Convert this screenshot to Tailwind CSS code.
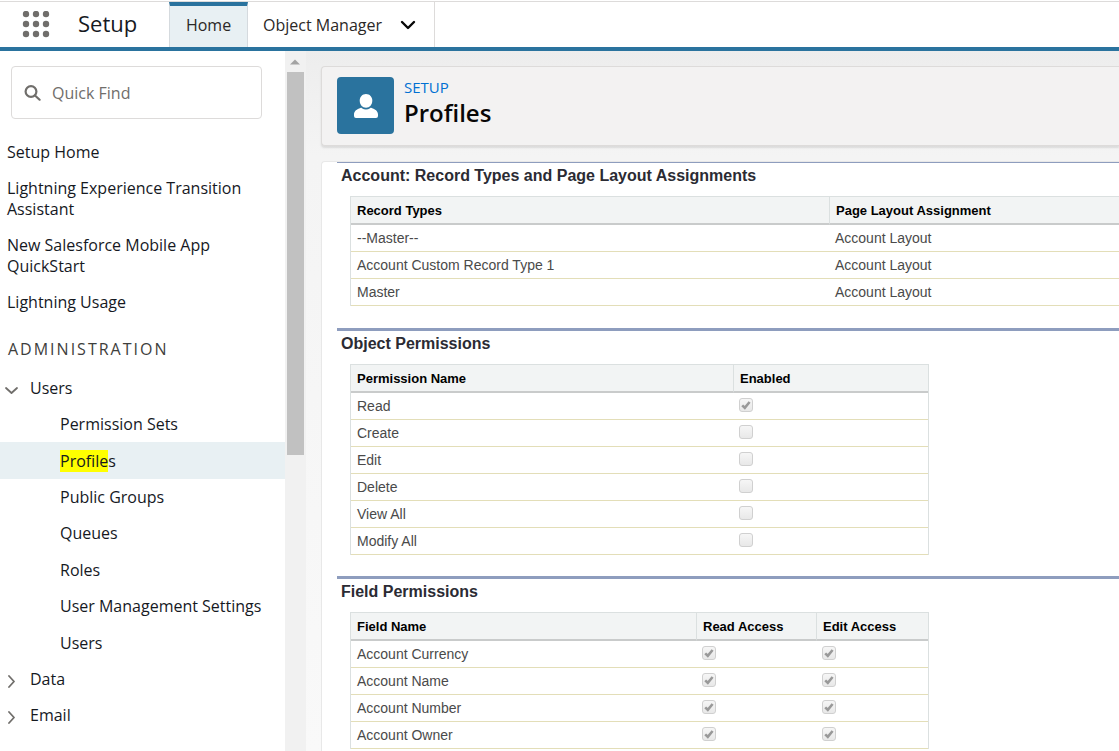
<!DOCTYPE html>
<html lang="en">
<head>
<meta charset="utf-8">
<meta name="viewport" content="width=device-width, initial-scale=1">
<title>Profiles | Setup</title>
<script src="https://cdn.jsdelivr.net/npm/@tailwindcss/browser@4"></script>
</head>
<body class="flex h-screen flex-col overflow-hidden bg-white font-['Open_Sans','Noto_Sans',sans-serif] text-base text-[#16191f]">
<svg class="hidden" aria-hidden="true">
  <symbol id="check" viewBox="0 0 14 14"><path d="M3.2 7.4 5.8 9.8 10.6 4" fill="none" stroke="#999" stroke-width="2.6"/></symbol>
</svg>

<header class="mt-px flex h-[50px] shrink-0 items-stretch border-t border-b-4 border-t-[#dddbda] border-b-[#2a739e]">
  <button class="ml-[22px] self-center" aria-label="App Launcher">
    <svg class="size-[28px]" viewBox="0 0 28 28" fill="#706e6b">
      <circle cx="4" cy="3" r="3.2"/><circle cx="14" cy="3" r="3.2"/><circle cx="24" cy="3" r="3.2"/>
      <circle cx="4" cy="13" r="3.2"/><circle cx="14" cy="13" r="3.2"/><circle cx="24" cy="13" r="3.2"/>
      <circle cx="4" cy="23" r="3.2"/><circle cx="14" cy="23" r="3.2"/><circle cx="24" cy="23" r="3.2"/>
    </svg>
  </button>
  <span class="ml-7 w-[91px] self-center pb-1 text-[22px] leading-7 text-[#16191f]">Setup</span>
  <nav class="flex" aria-label="Setup">
    <a href="#" aria-current="page" class="flex w-[79px] items-center justify-center border-x border-t-4 border-x-[#d5dade] border-t-[#2a739e] bg-[#e8f0f3] pb-1 text-[#2b2826]">Home</a>
    <a href="#" class="flex items-center pl-[15px] text-[#2b2826]">Object Manager</a>
    <button class="flex w-[53px] items-center justify-center border-r border-[#dddbda]" aria-label="More tabs">
      <svg class="h-[10px] w-4" viewBox="0 0 16 10" fill="none" stroke="#080707" stroke-width="2.4" stroke-linecap="round" stroke-linejoin="round"><path d="M2 2l6 6 6-6"/></svg>
    </button>
  </nav>
</header>

<div class="flex min-h-0 grow">
  <aside class="flex w-[306px] shrink-0">
    <div class="min-w-0 grow pt-[15px]">
      <label class="ml-[11px] mr-[23px] flex h-[53px] items-center gap-[11px] rounded border border-[#dddbda] pl-3">
        <svg class="size-[17px] shrink-0" viewBox="0 0 17 17" fill="none" stroke="#706e6b" stroke-width="2.2" stroke-linecap="round"><circle cx="7" cy="7.500" r="5.400"/><path d="M11 11.500l4.600 4.200"/></svg>
        <input type="search" placeholder="Quick Find" aria-label="Quick Find" class="w-full min-w-0 outline-none placeholder:text-[#706e6b]">
      </label>
      <nav aria-label="Setup menu">
        <ul class="mt-[23px] flex flex-col gap-[15px] px-[7px] leading-[21px]">
          <li><a href="#">Setup Home</a></li>
          <li><a href="#">Lightning Experience Transition<br>Assistant</a></li>
          <li><a href="#">New Salesforce Mobile App<br>QuickStart</a></li>
          <li><a href="#">Lightning Usage</a></li>
        </ul>
        <h2 class="mt-[26px] px-2 leading-[21px] tracking-[2px] text-[#3e3e3c]">ADMINISTRATION</h2>
        <ul class="mt-[10px]">
          <li>
            <a href="#" class="flex h-9 items-center gap-3 pl-[5px]"><svg class="mt-1 size-[13px]" viewBox="0 0 13 13" fill="none" stroke="#706e6b" stroke-width="1.8" stroke-linecap="round" stroke-linejoin="round"><path d="M1 4l5.500 5L12 4"/></svg>Users</a>
            <ul class="grid h-[255px] grid-rows-7">
              <li class="flex items-center pl-[60px]"><a href="#">Permission Sets</a></li>
              <li class="flex items-center bg-[#e8f0f3] pl-[60px]"><a href="#" aria-current="page"><mark class="bg-[#ff0] text-inherit">Profile</mark>s</a></li>
              <li class="flex items-center pl-[60px]"><a href="#">Public Groups</a></li>
              <li class="flex items-center pl-[60px]"><a href="#">Queues</a></li>
              <li class="flex items-center pl-[60px]"><a href="#">Roles</a></li>
              <li class="flex items-center pl-[60px]"><a href="#">User Management Settings</a></li>
              <li class="flex items-center pl-[60px]"><a href="#">Users</a></li>
            </ul>
          </li>
          <li><a href="#" class="flex h-9 items-center gap-3 pl-[5px]"><svg class="mt-1 size-[13px]" viewBox="0 0 13 13" fill="none" stroke="#706e6b" stroke-width="1.8" stroke-linecap="round" stroke-linejoin="round"><path d="M4 1l5 5.500L4 12"/></svg>Data</a></li>
          <li><a href="#" class="flex h-9 items-center gap-3 pl-[5px]"><svg class="mt-1 size-[13px]" viewBox="0 0 13 13" fill="none" stroke="#706e6b" stroke-width="1.8" stroke-linecap="round" stroke-linejoin="round"><path d="M4 1l5 5.500L4 12"/></svg>Email</a></li>
        </ul>
      </nav>
    </div>
    <div class="flex w-[21px] shrink-0 flex-col items-center bg-[#f1f1f1] pr-px" aria-hidden="true">
      <svg class="mt-2 h-[6px] w-[10px]" viewBox="0 0 10 6" fill="#a3a3a3"><path d="M5 0.500l5 5H0z"/></svg>
      <div class="mt-[7px] h-[383px] w-[17px] bg-[#c1c1c1]"></div>
    </div>
  </aside>

  <main class="flex min-w-0 grow flex-col overflow-hidden bg-linear-to-b from-[#ededed] via-[#f4f4f4] via-15% to-[#f9f9f9] pl-[15px] pt-[15px]">
    <div class="flex h-20 shrink-0 gap-[10px] rounded-l border border-r-0 border-[#dddbda] bg-[#f3f2f2] pl-[15px] pt-[10px] shadow-[0_2px_2px_rgba(0,0,0,0.1)]">
      <svg class="size-[57px]" viewBox="0 0 57 57"><rect width="57" height="57" rx="4" fill="#2a739e"/><g fill="#fff"><path d="M29 17c-3.700 0-6.300 2.900-6.300 6.700 0 3.700 2.600 7 6.300 7s6.300-3.300 6.300-7c0-3.800-2.600-6.700-6.300-6.700z"/><path d="M23.400 31c-3.500 1.200-6.400 3-6.400 6.400V39q0 2 2 2h20q2 0 2-2v-1.600c0-3.400-2.900-5.200-6.400-6.400-.7-.2-1-.2-1.500.2-2.700 1.700-5.500 1.700-8.200 0-.5-.4-.8-.4-1.500-.2z"/></g></svg>
      <div>
        <p class="text-[15px] leading-[21px] text-[#0070d2]">SETUP</p>
        <h1 class="text-2xl font-semibold leading-[30px] text-[#080707]">Profiles</h1>
      </div>
    </div>

    <div class="mt-[15px] grow rounded-tl border-t border-l border-[#e8e8e8] bg-white pl-[15px] font-['Liberation_Sans',Arial,sans-serif] text-[14px] text-[#4a4a4a]">
      <section class="mb-[22px] border-t border-[#8e9dbe]">
        <h2 class="h-[33px] px-1 pt-[2px] text-base leading-[21px] font-bold text-[#2b2b33]">Account: Record Types and Page Layout Assignments</h2>
        <table class="ml-[13px] w-[calc(100%-13px)] table-fixed border-separate border-spacing-0 border-t border-l border-[#dbe0e0] text-left">
          <thead><tr class="h-7 bg-[#f2f4f4] text-[13px] text-black">
            <th class="w-[479px] border-r border-b-2 border-r-[#dbe0e0] border-b-[#c9cbcb] px-[6px] pt-[2px]">Record Types</th>
            <th class="border-b-2 border-[#c9cbcb] px-[6px] pt-[2px]">Page Layout Assignment</th>
          </tr></thead>
          <tbody>
            <tr class="h-[27px]"><td class="border-b border-[#e3deb8] px-[6px]">--Master--</td><td class="border-b border-[#e3deb8] px-[5px]">Account Layout</td></tr>
            <tr class="h-[27px]"><td class="border-b border-[#e3deb8] px-[6px]">Account Custom Record Type 1</td><td class="border-b border-[#e3deb8] px-[5px]">Account Layout</td></tr>
            <tr class="h-[27px]"><td class="border-b border-[#e3deb8] px-[6px]">Master</td><td class="border-b border-[#e3deb8] px-[5px]">Account Layout</td></tr>
          </tbody>
        </table>
      </section>

      <section class="mb-[21px] border-t-3 border-[#8e9dbe]">
        <h2 class="h-[33px] px-1 pt-[2px] text-base leading-[21px] font-bold text-[#2b2b33]">Object Permissions</h2>
        <table class="ml-[13px] w-[579px] table-fixed border-separate border-spacing-0 border-x border-t border-[#dbe0e0] text-left">
          <thead><tr class="h-7 bg-[#f2f4f4] text-[13px] text-black">
            <th class="w-[383px] border-r border-b-2 border-r-[#dbe0e0] border-b-[#c9cbcb] px-[6px] pt-[2px]">Permission Name</th>
            <th class="border-b-2 border-[#c9cbcb] px-[6px] pt-[2px]">Enabled</th>
          </tr></thead>
          <tbody data-rows="Read:1|Create:0|Edit:0|Delete:0|View All:0|Modify All:0"></tbody>
        </table>
      </section>

      <section class="border-t-3 border-[#8e9dbe]">
        <h2 class="h-[33px] px-1 pt-[2px] text-base leading-[21px] font-bold text-[#2b2b33]">Field Permissions</h2>
        <table class="ml-[13px] w-[579px] table-fixed border-separate border-spacing-0 border-x border-t border-[#dbe0e0] text-left">
          <thead><tr class="h-7 bg-[#f2f4f4] text-[13px] text-black">
            <th class="w-[346px] border-r border-b-2 border-r-[#dbe0e0] border-b-[#c9cbcb] px-[6px] pt-[2px]">Field Name</th>
            <th class="w-[120px] border-r border-b-2 border-r-[#dbe0e0] border-b-[#c9cbcb] px-[6px] pt-[2px]">Read Access</th>
            <th class="border-b-2 border-[#c9cbcb] px-[6px] pt-[2px]">Edit Access</th>
          </tr></thead>
          <tbody data-rows="Account Currency:11|Account Name:11|Account Number:11|Account Owner:11"></tbody>
        </table>
      </section>
    </div>
  </main>
</div>

<script>
// Each entry is "name:flags", one flag per permission column.
document.querySelectorAll('tbody[data-rows]').forEach(function (body) {
  var heads = body.parentNode.querySelectorAll('th');
  body.dataset.rows.split('|').forEach(function (entry) {
    var parts = entry.split(':');
    var html = '<td class="border-b border-[#e3deb8] px-[6px]">' + parts[0] + '</td>';
    parts[1].split('').forEach(function (flag, i) {
      var on = flag === '1';
      html += '<td class="border-b border-[#e3deb8] px-[5px]"><span class="mb-[2px] grid size-[14px]">' +
        '<input type="checkbox" disabled' + (on ? ' checked' : '') + ' aria-label="' + parts[0] + ' ' + heads[i + 1].textContent + '" class="col-start-1 row-start-1 size-[14px] appearance-none rounded-[3px] border border-[#d0d0d0] bg-linear-to-b from-[#f6f6f6] to-[#e8e8e8]">' +
        (on ? '<svg class="col-start-1 row-start-1 size-[14px]" aria-hidden="true"><use href="#check"/></svg>' : '') + '</span></td>';
    });
    var row = document.createElement('tr');
    row.className = 'h-[27px]';
    row.innerHTML = html;
    body.appendChild(row);
  });
});
</script>
</body>
</html>
